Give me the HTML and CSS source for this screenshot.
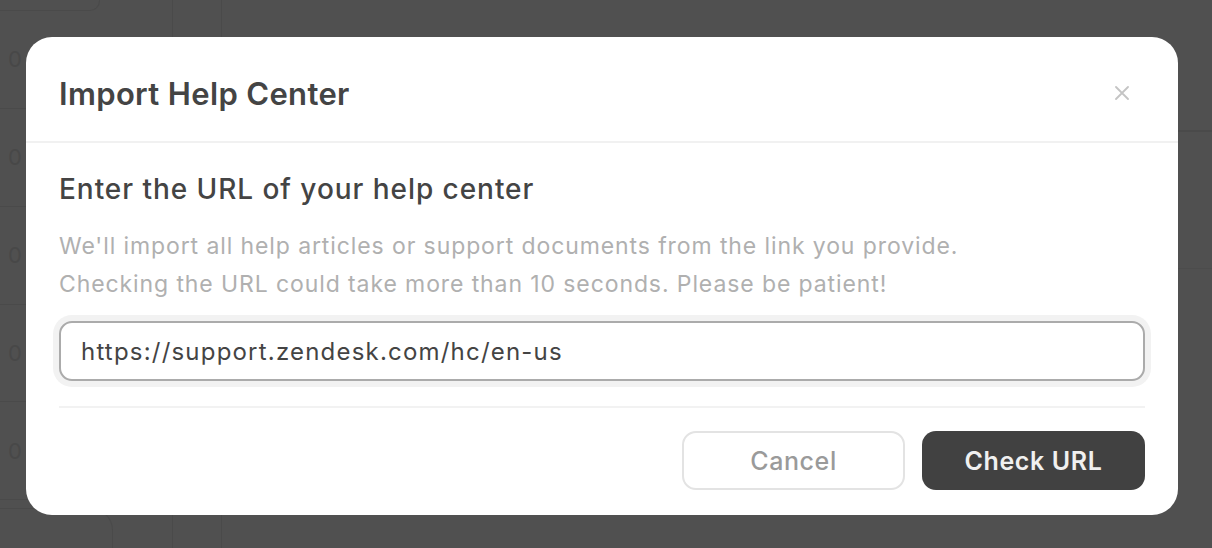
FILE: index.html
```html
<!DOCTYPE html>
<html>
<head>
<meta charset="utf-8">
<link rel="stylesheet" href="styles.css">
</head>
<body>
<div class="page">
  <div class="table">
    <div class="col-a">
      <div class="pill top"></div>
      <div class="row"><span class="num">0</span></div>
      <div class="row"><span class="num">0</span></div>
      <div class="row"><span class="num">0</span></div>
      <div class="row"><span class="num">0</span></div>
      <div class="row"><span class="num">0</span></div>
      <div class="pill bottom"></div>
    </div>
    <div class="col-b"></div>
    <div class="col-c">
      <div class="band"></div>
    </div>
  </div>
</div>

<div class="overlay">
  <div class="modal">
    <div class="modal-header">
      <h1 class="modal-title">Import Help Center</h1>
      <button class="close" aria-label="Close">
        <svg width="14" height="14" viewBox="0 0 14 14"><path d="M1 1L13 13M13 1L1 13" stroke="#c4c4c4" stroke-width="1.8" stroke-linecap="round"/></svg>
      </button>
    </div>
    <div class="modal-body">
      <h2 class="heading">Enter the URL of your help center</h2>
      <p class="desc">We'll import all help articles or support documents from the link you provide.<br>Checking the URL could take more than 10 seconds. Please be patient!</p>
      <input class="url" type="text" value="https://support.zendesk.com/hc/en-us">
      <div class="divider"></div>
      <div class="actions">
        <button class="btn cancel">Cancel</button>
        <button class="btn primary">Check URL</button>
      </div>
    </div>
  </div>
</div>
</body>
</html>
```

FILE: styles.css
```css
* { box-sizing: border-box; }
html, body { margin: 0; padding: 0; }
body {
  width: 1212px;
  height: 548px;
  overflow: hidden;
  background: #505050;
  font-family: Inter, "Noto Sans", sans-serif;
  position: relative;
}

/* dimmed background page */
.page { width: 1212px; height: 548px; }
.table { display: flex; height: 100%; }
.col-a {
  width: 173px;
  display: flex;
  flex-direction: column;
  border-right: 1px solid #4a4a4a;
}
.pill {
  border: 1px solid #4a4a4a;
  border-left: none;
}
.pill.top { margin-top: -9px; height: 20px; width: 100px; border-radius: 0 18px 18px 0; }
.pill.bottom { margin-top: 8px; height: 40px; width: 113px; border-radius: 0 22px 0 0; border-bottom: none; }
.row {
  height: 99px;
  display: flex;
  align-items: center;
  border-bottom: 1px solid #4a4a4a;
  padding-left: 8px;
}
.num { color: #484848; font-size: 22px; }
.col-b { width: 49px; border-right: 1px solid #4a4a4a; }
.col-c { flex: 1; padding-top: 130px; }
.band { height: 139px; border-top: 2px solid #4a4a4a; border-bottom: 1px solid #4c4c4c; }

/* modal */
.overlay {
  position: absolute;
  inset: 0;
}
.modal {
  position: absolute;
  left: 26px;
  top: 37px;
  width: 1152px;
  background: #fff;
  border-radius: 26px;
  overflow: hidden;
}
.modal-header {
  height: 106px;
  padding: 8px 49px 0 33px;
  display: flex;
  align-items: center;
  justify-content: space-between;
  border-bottom: 2px solid #f1f1f1;
}
.modal-title {
  margin: 0;
  font-size: 31px;
  font-weight: 600;
  color: #444;
  letter-spacing: 0.35px;
}
.close {
  border: none;
  background: none;
  padding: 0;
  width: 14px;
  height: 14px;
  display: flex;
}
.modal-body {
  padding: 29px 33px 25px 33px;
  display: flex;
  flex-direction: column;
}
.heading {
  margin: 0;
  font-size: 28px;
  line-height: 34px;
  font-weight: 500;
  color: #444;
  letter-spacing: 0.95px;
}
.desc {
  margin: 21px 0 0 0;
  font-size: 23px;
  line-height: 38px;
  color: #b0b0b0;
  letter-spacing: 0.9px;
}
.url {
  margin-top: 18px;
  height: 60px;
  width: 100%;
  border: 2px solid #ababab;
  border-radius: 13px;
  box-shadow: 0 0 0 6px #f2f2f2;
  padding: 0 20px;
  font-family: inherit;
  font-size: 24px;
  letter-spacing: 1.2px;
  color: #444;
  outline: none;
}
.divider {
  margin-top: 25px;
  height: 2px;
  background: #f2f2f2;
}
.actions {
  margin-top: 23px;
  display: flex;
  justify-content: flex-end;
  gap: 17px;
}
.btn {
  width: 223px;
  height: 59px;
  border-radius: 14px;
  font-family: inherit;
  font-size: 25px;
  font-weight: 500;
  letter-spacing: 0.6px;
}
.cancel {
  background: #fff;
  border: 2px solid #e3e3e3;
  color: #9a9a9a;
}
.primary {
  background: #414141;
  border: none;
  color: #f0f0f0;
  font-weight: 600;
}
```
